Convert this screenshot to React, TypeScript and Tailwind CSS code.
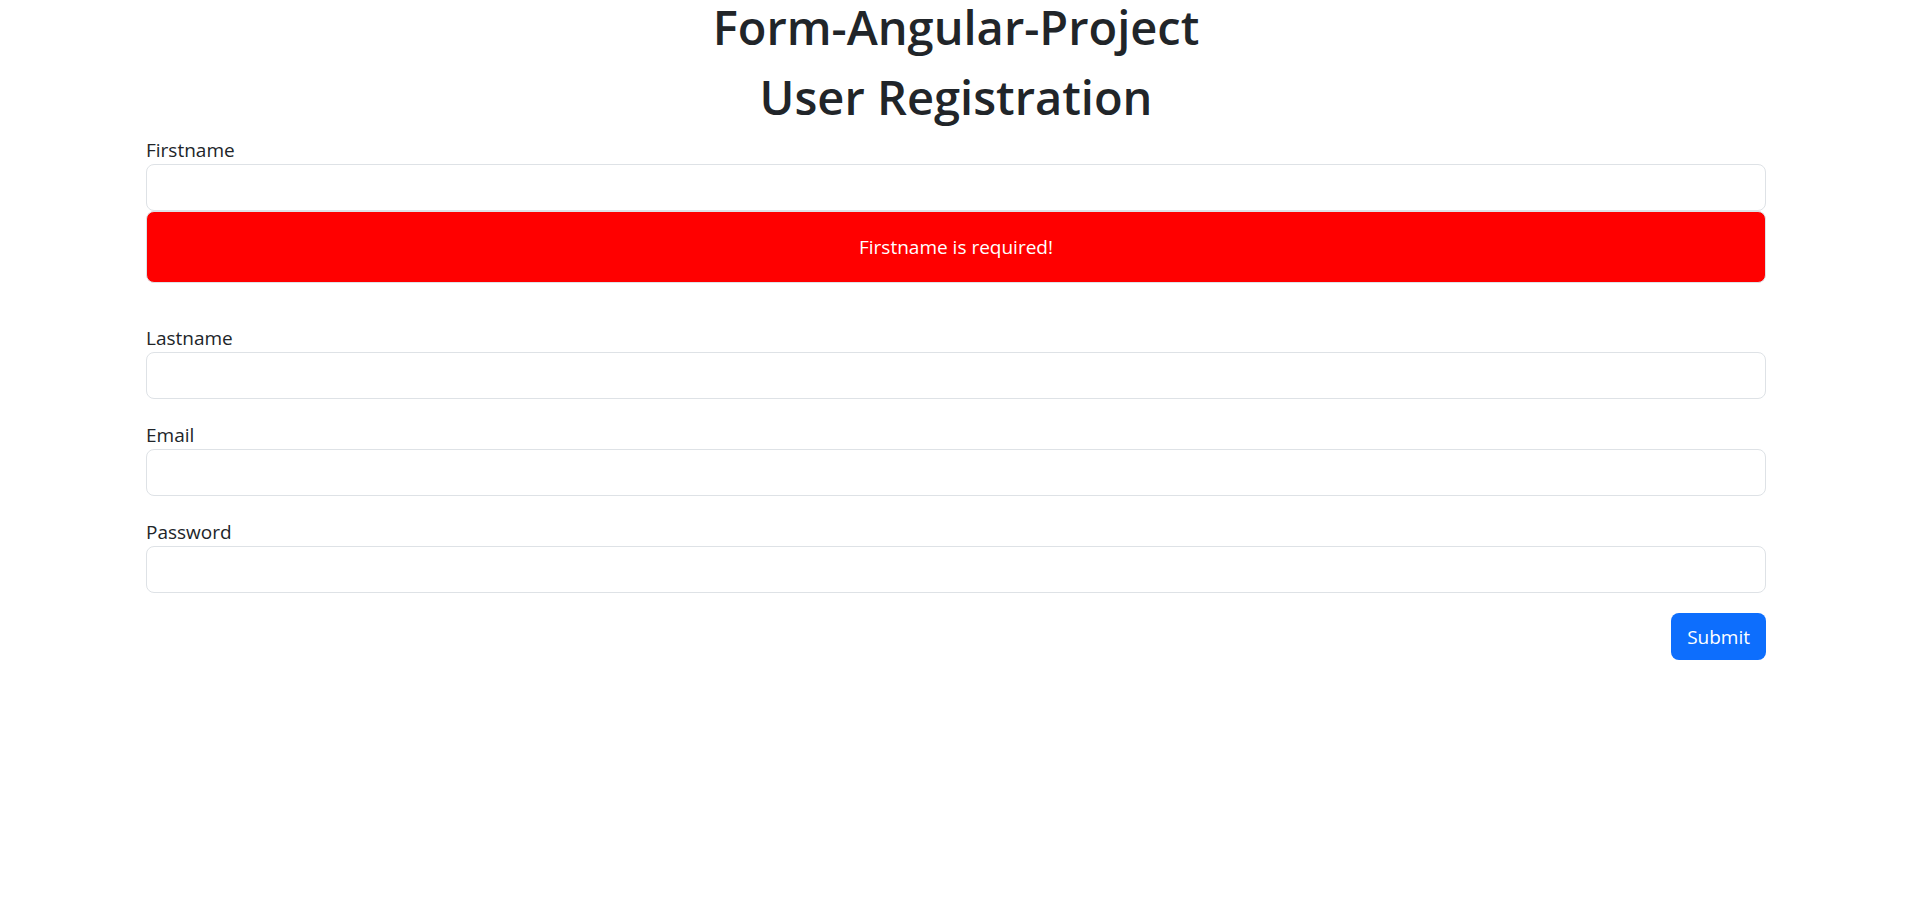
import { useState } from "react";

const headingClass =
  "text-center font-['Open_Sans','Noto_Sans',sans-serif] text-[47px] leading-[54px] font-semibold";
const inputClass =
  "block h-[47px] w-full rounded-lg border border-[#dee2e6] bg-white px-4 text-[19px] text-[#212529] outline-none";
const labelClass = "block w-fit pt-0.5 leading-7";

type FieldProps = { id: string; label: string; type?: string };

function Field({ id, label, type = "text" }: FieldProps) {
  return (
    <div className="mb-5">
      <label htmlFor={id} className={labelClass}>{label}</label>
      <input id={id} name={id} type={type} className={inputClass} />
    </div>
  );
}

export default function App() {
  const [firstname, setFirstname] = useState("");

  return (
    <div className="pr-1 font-['Open_Sans','Noto_Sans',sans-serif] text-[19px] leading-[30px] text-[#212529]">
      <main className="mx-auto max-w-[1650px] px-[15px]">
        <h1 className={`${headingClass} mb-4`}>Form-Angular-Project</h1>
        <h1 className={`${headingClass} mb-2.5`}>User Registration</h1>
        <form onSubmit={(e) => e.preventDefault()}>
          <div className="mb-[39px]">
            <label htmlFor="firstname" className={labelClass}>Firstname</label>
            <input
              id="firstname"
              name="firstname"
              type="text"
              value={firstname}
              onChange={(e) => setFirstname(e.target.value)}
              className={inputClass}
            />
            {firstname === "" && (
              <div role="alert" className="rounded-lg border border-[#dee2e6] bg-[#ff0000] py-5 text-center text-white">
                Firstname is required!
              </div>
            )}
          </div>
          <Field id="lastname" label="Lastname" />
          <Field id="email" label="Email" type="email" />
          <Field id="password" label="Password" type="password" />
          <div className="flex justify-end">
            <button type="submit" className="h-[47px] rounded-lg bg-[#0d6efd] px-4 text-white">Submit</button>
          </div>
        </form>
      </main>
    </div>
  );
}
